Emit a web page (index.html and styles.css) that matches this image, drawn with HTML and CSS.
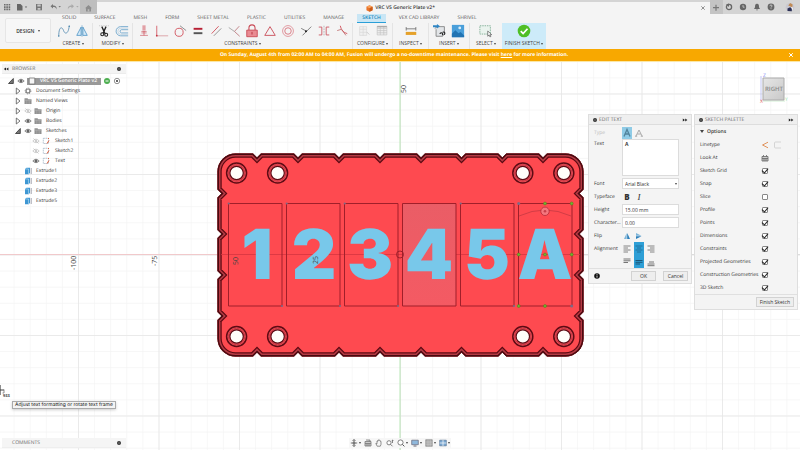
FILE: index.html
```html
<!DOCTYPE html>
<html lang="en">
<head>
<meta charset="utf-8">
<title>VRC V5 Generic Plate v2*</title>
<link rel="stylesheet" href="styles.css">
</head>
<body>
<svg class="defs" aria-hidden="true">
  <symbol id="eye" viewBox="0 0 8 8"><path d="M.8 4Q4 .4 7.2 4 4 7.400 .8 4z" fill="#ddd" stroke="#777" stroke-width=".8"/><circle cx="4" cy="4" r="1.400" fill="#666"/></symbol>
  <symbol id="eye-off" viewBox="0 0 8 8"><path d="M.8 4Q4 .4 7.200 4 4 7.400 .8 4zM1.500 1.500l5 5" fill="none" stroke="#bbb" stroke-width=".7"/><circle cx="4" cy="4" r="1.200" fill="#ccc"/></symbol>
  <symbol id="folder" viewBox="0 0 8 8"><path d="M.5 1.300h3l.8.9h3.200v4.800h-7z" fill="#909090"/><path d="M.5 3.200h7M2.800 3.200v3.800M5.200 3.200v3.800" stroke="#bbb" stroke-width=".5"/></symbol>
  <symbol id="closed" viewBox="0 0 8 8"><path d="M2.300 1v6L6 4z" fill="#fff" stroke="#555" stroke-width=".8"/></symbol>
  <symbol id="open" viewBox="0 0 8 8"><path d="M6.300 1.500v5H1.500z" fill="#777" stroke="#333" stroke-width=".8"/></symbol>
  <symbol id="sketch" viewBox="0 0 8 8"><path d="M1.300 1.300h5.200v5.200H1.300z" fill="#fff" stroke="#8aa0b4" stroke-width=".6" stroke-dasharray="1.600 .6"/><path d="M5 6.500l2-3M6 1l1 1" stroke="#e2603c" stroke-width="1"/></symbol>
  <symbol id="extrude" viewBox="0 0 8 8"><path d="M1 2l1.500-1.300H6v5L4.800 7.300H1z" fill="#3e97d3"/><path d="M1 2h3.500v5.300" stroke="#bfe0f5" stroke-width=".6" fill="none"/><path d="M7.200 1v6" stroke="#667" stroke-width=".6"/></symbol>
  <symbol id="gear" viewBox="0 0 8 8"><circle cx="4" cy="4" r="2" fill="none" stroke="#777" stroke-width="1.200"/><circle cx="4" cy="4" r="2.900" fill="none" stroke="#777" stroke-width=".8" stroke-dasharray="1.200 1.078"/></symbol>
  <symbol id="dot" viewBox="0 0 6 6"><circle cx="3" cy="3" r="2" fill="#333"/><path d="M2 3h2" stroke="#bbb" stroke-width=".5"/></symbol>
  <symbol id="left" viewBox="0 0 6 6"><path d="M3 1.500v3L.8 3zM5.400 1.500v3L3.200 3z" fill="#222"/></symbol>
  <symbol id="right" viewBox="0 0 6 6"><path d="M.8 1.500v3L3 3zM3.200 1.500v3L5.400 3z" fill="#222"/></symbol>
</svg>

<header class="topbar">
  <nav class="quick">
    <button class="ico" aria-label="Data panel"><svg viewBox="0 0 12 12"><g fill="#6e6e6e"><path d="M3 3h1.600v1.600H3zM5.300 3h1.600v1.600H5.300zM7.600 3h1.600v1.600H7.600zM3 5.300h1.600v1.600H3zM5.300 5.300h1.600v1.600H5.300zM7.600 5.300h1.600v1.600H7.600zM3 7.600h1.600v1.600H3zM5.300 7.600h1.600v1.600H5.300zM7.600 7.600h1.600v1.600H7.600z"/></g></svg></button>
    <button class="ico file" aria-label="File"><svg viewBox="0 0 14 12"><path d="M2 3h3.500L7.500 5v4.500H2z" fill="#666"/><path d="M9.800 5.500h2.400l-1.200 1.500z" fill="#666"/></svg></button>
    <button class="ico" aria-label="Save"><svg viewBox="0 0 12 12"><path d="M3 3h6v6.300H3z" fill="#777"/><path d="M4.300 3.600h3.400v2H4.300zM4.600 7h2.800v1.700H4.600z" fill="#c9c9c9"/></svg></button>
    <button class="ico wide" aria-label="Undo"><svg viewBox="0 0 14 12"><path d="M5 3L2.500 5.300 5 7.500V6c2 0 3 .5 3.500 2.500C9 5.500 7.500 4.500 5 4.500z" fill="#777"/><path d="M10.500 5h2.400l-1.200 1.500z" fill="#777"/></svg></button>
    <button class="ico wide" aria-label="Redo"><svg viewBox="0 0 14 12"><path d="M6.500 3L9 5.300 6.500 7.500V6C4.500 6 3.500 6.500 3 8.500 2.500 5.500 4 4.500 6.500 4.500z" fill="#aaa"/><path d="M11.200 5h2.400l-1.200 1.500z" fill="#aaa"/></svg></button>
  </nav>
  <button class="home" aria-label="Home"><svg viewBox="0 0 16 12"><path d="M8.500 4L5 7.300H6V10.500h5V7.300h1z" fill="#8d8d8d"/><path d="M7.700 8.200h1.600v2.300H7.700z" fill="#bbb"/></svg></button>
  <div class="doc">
    <svg class="cube" viewBox="0 0 8 8"><path d="M4 .3L7.500 2v4L4 7.800.5 6V2z" fill="#e8732a"/><path d="M4 .3L7.500 2 4 3.700.5 2z" fill="#f9a35d"/><path d="M4 3.700v4.100L7.500 6V2z" fill="#c95a17"/></svg>
    <span>VRC V5 Generic Plate v2*</span>
    <button class="close" aria-label="Close document"><svg viewBox="0 0 6 6"><path d="M1.300 1.300l3.400 3.400M4.700 1.300L1.300 4.700" stroke="#777" stroke-width=".8"/></svg></button>
  </div>
  <button class="plus" aria-label="New design"><svg viewBox="0 0 12 12"><path d="M6 3.700v6M3 6.700h6" stroke="#777" stroke-width="1.200"/></svg></button>
  <nav class="status">
    <button class="ico" aria-label="Extensions"><svg viewBox="0 0 12 12"><circle cx="6" cy="6" r="2.600" fill="none" stroke="#666" stroke-width="1.300"/><path d="M6 6V2.500L3 3.500z" fill="#666"/></svg></button>
    <button class="ico" aria-label="Job status"><svg viewBox="0 0 12 12"><circle cx="6" cy="6" r="3.200" fill="#666"/><path d="M6 4v2.200h1.600" stroke="#ddd" stroke-width=".7" fill="none"/></svg></button>
    <button class="ico" aria-label="Notifications"><svg viewBox="0 0 12 12"><path d="M6 2.800c2 0 2 2 2 3.500l1 1.700H3l1-1.700c0-1.500 0-3.500 2-3.500zM5.200 8.500h1.600v.8H5.200z" fill="#666"/></svg></button>
    <button class="ico" aria-label="Help"><svg viewBox="0 0 12 12"><circle cx="6" cy="6" r="3.400" fill="#666"/><path d="M4.900 5.200c0-1.600 2.200-1.500 2.200-.2 0 .8-1.100.7-1.100 1.600M6 7.300v.8" stroke="#ddd" stroke-width=".8" fill="none"/></svg></button>
    <button class="ico avatar" aria-label="Account"><svg viewBox="0 0 12 12"><circle cx="6" cy="6.300" r="4.300" fill="#c9c8d0"/><path d="M4.200 4.500l2-2.500 2.400 1.500-.3 2.800z" fill="#c18b55"/><path d="M3.500 10V7.500l2.500-1.300 1.800 1V10.200z" fill="#2c3156"/><path d="M7 6l2 .8-.5 2.800z" fill="#f7f7fa"/></svg></button>
  </nav>
</header>

<section class="ribbon">
  <button class="design">DESIGN <i class="caret"></i></button>
  <div class="ribbon-main">
    <nav class="tabs">
      <a href="#">SOLID</a><a href="#">SURFACE</a><a href="#">MESH</a><a href="#">FORM</a><a href="#">SHEET METAL</a><a href="#">PLASTIC</a><a href="#">UTILITIES</a><a href="#">MANAGE</a><a href="#" class="on">SKETCH</a><a href="#">VEX CAD LIBRARY</a><a href="#">SHRIVEL</a>
    </nav>
    <div class="groups">
      <div class="group create">
        <div class="tools">
          <svg viewBox="0 0 16 16"><path d="M2 14C2 2 6 3 7.500 7.500S13 12 14 2" fill="none" stroke="#4c86ad" stroke-width=".9"/><circle cx="2" cy="13.700" r=".9" fill="#4c86ad"/><circle cx="14" cy="2.500" r=".9" fill="#4c86ad"/></svg>
          <svg viewBox="0 0 16 16"><path d="M7 3.500V13H2zM9 3.500V13h5z" fill="#d5e9f7" stroke="#4991c4" stroke-width=".9"/><path d="M8 1.500v13" stroke="#4991c4" stroke-width=".7"/></svg>
        </div>
        <button>CREATE <i class="caret"></i></button>
      </div>
      <div class="group modify">
        <div class="tools">
          <svg viewBox="0 0 16 16"><path d="M2.500 2h11" stroke="#999" stroke-width=".6" stroke-dasharray="1 1"/><path d="M5.500 3l3.700 8M10.300 3L7 10.500" stroke="#222" stroke-width="1.500"/><circle cx="6" cy="11.800" r="1.700" fill="none" stroke="#222" stroke-width="1.200"/><circle cx="10.500" cy="12.300" r="1.700" fill="none" stroke="#222" stroke-width="1.200"/></svg>
          <svg viewBox="0 0 16 16"><path d="M15 3H6.500a5 5 0 0 0 0 10.500H15M15 6.500H7.300a1.900 1.900 0 0 0 0 3.700H15" fill="none" stroke="#5c9cc7" stroke-width=".9"/><path d="M15 4.700H6.900a3.500 3.500 0 0 0 0 7.200H15" fill="none" stroke="#a9c7dc" stroke-width=".7"/></svg>
        </div>
        <button>MODIFY <i class="caret"></i></button>
      </div>
      <div class="group constraints">
        <div class="tools">
          <svg viewBox="0 0 16 16"><path d="M7 1.500v6M9 1.500v6" stroke="#d04a56" stroke-width=".9"/><path d="M5 8.500h6M5 10.200h6M3.500 13h9" stroke="#d88a91" stroke-width="1.100"/><path d="M8 8v5" stroke="#d04a56" stroke-width=".8"/></svg>
          <svg viewBox="0 0 16 16"><path d="M2 2v11.500" stroke="#d04a56" stroke-width=".9"/><path d="M2 13.500h13" stroke="#d99ba0" stroke-width="1"/><circle cx="2" cy="13.300" r="1" fill="#c43442"/></svg>
          <svg viewBox="0 0 16 16"><circle cx="7" cy="9.500" r="4.600" fill="none" stroke="#d04a56"/><path d="M8 2l7 5.500" stroke="#777" stroke-width=".9"/></svg>
          <svg viewBox="0 0 16 16"><path d="M3 5.500h10" stroke="#b71f33" stroke-width="2.200"/><path d="M3 10.500h10" stroke="#555" stroke-width="2.200"/></svg>
          <svg viewBox="0 0 16 16"><path d="M3 11l8-8.500" stroke="#d04a56"/><path d="M5.500 13.500L14 5" stroke="#888"/></svg>
          <svg viewBox="0 0 16 16"><path d="M14 2.500L8.500 8.500l6 5.500" fill="none" stroke="#b66a70" stroke-width=".9"/><path d="M2 4l6.500 4.500" stroke="#999" stroke-width=".9"/></svg>
          <svg viewBox="0 0 16 16"><path d="M4.500 7V4.500a3.500 3.500 0 0 1 7 0V7" fill="none" stroke="#c84854" stroke-width="1.200"/><path d="M2 7h12v7.500H2z" fill="#e98b92" stroke="#c84854"/><path d="M8 9v3" stroke="#b02c3a"/></svg>
          <svg viewBox="0 0 16 16"><path d="M8 3L2 13h12z" fill="none" stroke="#c84854"/></svg>
          <svg viewBox="0 0 16 16"><circle cx="8" cy="8" r="6.200" fill="none" stroke="#dc858d" stroke-width=".9"/><circle cx="8" cy="8" r="3.700" fill="none" stroke="#d4606a" stroke-width=".9"/></svg>
          <svg viewBox="0 0 16 16"><path d="M14 3L4 13M2.500 5l6 3.200" stroke="#666" stroke-width=".9"/><circle cx="8" cy="8.300" r="1.200" fill="#222"/></svg>
          <svg viewBox="0 0 16 16"><path d="M2 3.500h3.500v9H2M14 3.500h-3.500v9H14" fill="none" stroke="#cc5661"/><path d="M8 2v12" stroke="#999" stroke-width=".7" stroke-dasharray="2 1"/></svg>
          <svg viewBox="0 0 16 16"><path d="M6 2c1 5 4 8 8 9" fill="none" stroke="#d04a56"/><path d="M2.500 7.500l5-1.500M8 7l4.500 6" stroke="#b66" stroke-width=".9"/></svg>
        </div>
        <button>CONSTRAINTS <i class="caret"></i></button>
      </div>
      <div class="group configure">
        <div class="tools">
          <svg viewBox="0 0 16 16"><path d="M3 3h8v10H3zM3 6h8M3 9.500h8M7 3v10" fill="#f0f0f0" stroke="#d8d8d8" stroke-width=".8"/><path d="M11 9l3 3" stroke="#c7c7c7"/></svg>
          <svg viewBox="0 0 16 16"><path d="M2.500 2.500h11v10h-11zM2.500 5h11M2.500 7.500h11M2.500 10h11M6 2.500v10M10 2.500v10" fill="#eee" stroke="#c4c4c4" stroke-width=".8"/><path d="M2.500 3h11" stroke="#aaa" stroke-width="1.500"/></svg>
        </div>
        <button>CONFIGURE <i class="caret"></i></button>
      </div>
      <div class="group inspect">
        <div class="tools"><svg viewBox="0 0 16 16"><path d="M2.500 5.500h11M2.500 3.500v4M13.500 3.500v4" stroke="#666" stroke-width=".9"/><path d="M2 9h12v3.500H2z" fill="#e5a12a"/></svg></div>
        <button>INSPECT <i class="caret"></i></button>
      </div>
      <div class="group insert">
        <div class="tools">
          <svg viewBox="0 0 16 16"><path d="M2 5l3-2h8v8l-2 3H3.500V6" fill="#e2e5e8" stroke="#666" stroke-width=".8"/><path d="M0 1.500h4.500V0L8 2.700 4.500 5V3.800H0z" fill="#2f86c5"/><path d="M8 11.500a1.500 1.500 0 1 1 2.500 1.200M11 9.500a1.500 1.500 0 1 1 1.500 2.500" fill="none" stroke="#222" stroke-width="1.200"/></svg>
          <svg viewBox="0 0 16 16"><path d="M1 1h14v14H1z" fill="#4a9fda"/><path d="M1 11l4-4 3.500 3.500L11 9l4 4v2H1z" fill="#2274b3"/><circle cx="10" cy="4.500" r="1.600" fill="#d9ecf8"/></svg>
        </div>
        <button>INSERT <i class="caret"></i></button>
      </div>
      <div class="group select">
        <div class="tools"><svg viewBox="0 0 16 16"><path d="M1 2h12v9.500H1z" fill="#eaf3ee" stroke="#6fa588" stroke-width=".9" stroke-dasharray="1.700 1"/><path d="M10 8v6l1.500-1.400 1 2.200 1-.5-1-2.100H14.500z" fill="#fff" stroke="#444" stroke-width=".7"/></svg></div>
        <button>SELECT <i class="caret"></i></button>
      </div>
      <div class="group finish">
        <div class="tools"><svg viewBox="0 0 16 16"><circle cx="8" cy="8" r="7.200" fill="#4fbf26"/><path d="M4.300 8.200l2.700 2.700 5-5.500" fill="none" stroke="#fff" stroke-width="2"/></svg></div>
        <button>FINISH SKETCH <i class="caret"></i></button>
      </div>
    </div>
  </div>
</section>

<div class="banner">
  <p>On Sunday, August 4th from 02:00 AM to 04:00 AM, Fusion will undergo a no-downtime maintenance. Please visit <a href="#">here</a> for more information.</p>
  <button aria-label="Dismiss"><svg viewBox="0 0 6 6"><path d="M1.200 1.200l3.600 3.600M4.800 1.200L1.200 4.800" stroke="#fff" stroke-width="1"/></svg></button>
</div>

<main class="workspace">
  <svg class="canvas" viewBox="0 62 800 388" preserveAspectRatio="xMidYMid slice" role="img" aria-label="Sketch canvas">
    <defs>
      <pattern id="minor" x="400" y="254.500" width="16.100" height="16.100" patternUnits="userSpaceOnUse"><path d="M0 0H16.100M0 0V16.100" stroke="#f4f4f4" stroke-width="1.400" fill="none"/></pattern>
      <pattern id="major" x="400" y="254.500" width="80.500" height="80.500" patternUnits="userSpaceOnUse"><path d="M0 0H80.500M0 0V80.500" stroke="#e6e6e6" stroke-width="1.600" fill="none"/></pattern>
      <linearGradient id="hover" x2="0" y2="1"><stop stop-color="#ea5d66"/><stop offset="1" stop-color="#f45a63"/></linearGradient>
      <path id="plate" d="M236 153.500H253l4 4 4-4H294l4 4 4-4H335l4 4 4-4H376l4 4 4-4H417l4 4 4-4H457.500l4 4 4-4H498.300l4 4 4-4H539l4 4 4-4H565.500A18 18 0 0 1 583.500 171.500V189.500l-4 4 4 4V230l-4 4 4 4V271l-4 4 4 4V312l-4 4 4 4V338.500A18 18 0 0 1 565.500 356.500H547l-4-4-4 4H506.300l-4-4-4 4H465.500l-4-4-4 4H425l-4-4-4 4H384l-4-4-4 4H343l-4-4-4 4H302l-4-4-4 4H261l-4-4-4 4H235.500A18 18 0 0 1 217.500 338.500V320l4-4-4-4V279l4-4-4-4V238l4-4-4-4V197.500l4-4-4-4V171.500A18 18 0 0 1 235.500 153.500z"/>
      <clipPath id="inside"><use href="#plate"/></clipPath>
      <g id="hole"><circle r="10" fill="#f2525b" stroke="#5e0b14" stroke-width="1.500"/><circle r="8.200" fill="none" stroke="#ca3642"/><circle r="6.700" fill="#fffefa" stroke="#5e0b14" stroke-width="1.200"/></g>
    </defs>
    <path d="M0 62H800V450H0z" fill="#fff"/>
    <path d="M0 62H800V450H0z" fill="url(#minor)"/>
    <path d="M0 62H800V450H0z" fill="url(#major)"/>
    <path d="M400 62V450" stroke="#b9e6b6"/>
    <path d="M0 254.500H400" stroke="#f1c9cb"/><path d="M400 254.500H800" stroke="#ddd"/>
    <g class="ruler">
      <text transform="translate(76 270) rotate(-90)">-100</text>
      <text transform="translate(157 266) rotate(-90)">-75</text>
      <text transform="translate(406 93) rotate(-90)">50</text>
    </g>
    <g clip-path="url(#inside)">
      <use href="#plate" fill="#fe4a50" stroke="#5c0a12" stroke-width="8.400"/>
      <use href="#plate" fill="none" stroke="#b53a44" stroke-width="6"/>
      <use href="#plate" fill="none" stroke="#4a0a10" stroke-width="3"/>
    </g>
    <use href="#hole" x="236.600" y="173"/><use href="#hole" x="277.600" y="173"/><use href="#hole" x="522.800" y="173"/><use href="#hole" x="563.800" y="173"/>
    <use href="#hole" x="236.600" y="336.500"/><use href="#hole" x="277.600" y="336.500"/><use href="#hole" x="522.800" y="336.500"/><use href="#hole" x="563.800" y="336.500"/>
    <path d="M221 254.500H580" stroke="#d53540" stroke-width=".8"/>
    <g fill="none" stroke="#a01f2a">
      <path d="M228.500 203.500h53.500v102.500h-53.500zM286.500 203.500h53.500v102.500h-53.500zM344.500 203.500h53.500v102.500h-53.500zM460.500 203.500h53.500v102.500h-53.500zM518.500 203.500h53.500v102.500h-53.500z"/>
      <path d="M402.500 203.500h53.500v102.500h-53.500z" fill="url(#hover)"/>
      <circle cx="400" cy="254.500" r="3.500"/>
      <path d="M519 216Q545 204 571 216" stroke="#bd3640" stroke-width=".7"/>
    </g>
    <g class="plate-text">
      <text x="257" y="279">1</text><text x="314" y="279">2</text><text x="370" y="279">3</text><text x="429" y="279">4</text><text x="487" y="279">5</text><text x="545" y="279">A</text>
    </g>
    <g class="ruler"><text transform="translate(238 265) rotate(-90)">50</text><text transform="translate(318 264) rotate(-90)">25</text></g>
    <circle cx="545" cy="211.300" r="4.200" fill="#f4777e" stroke="#b52a36" stroke-width=".8"/><circle cx="545" cy="211.300" r="1.300" fill="#c9404b"/>
    <g fill="#70b52c" stroke="#4d7d1c" stroke-width=".5"><circle cx="545" cy="203.500" r="1.500"/><circle cx="571.700" cy="203.500" r="1.500"/><circle cx="518.700" cy="254.500" r="1.500"/><circle cx="545" cy="254.500" r="1.500"/><circle cx="571.700" cy="254.500" r="1.500"/><circle cx="518.700" cy="306" r="1.500"/><circle cx="545" cy="306" r="1.500"/></g>
    <g fill="#7d6a86"><circle cx="518.700" cy="203.500" r="1.500"/><circle cx="571.700" cy="306" r="1.500"/><circle cx="228.700" cy="203.500" r="1.100"/><circle cx="286.700" cy="203.500" r="1.100"/><circle cx="344.700" cy="203.500" r="1.100"/><circle cx="460.700" cy="203.500" r="1.100"/><circle cx="282" cy="306" r="1.100"/><circle cx="340" cy="306" r="1.100"/><circle cx="398" cy="306" r="1.100"/><circle cx="514" cy="306" r="1.100"/></g>
    <path d="M0 385v10M0 390h4" stroke="#444" stroke-width="1.200"/>
    <path d="M4 389.500v3.500h-1.500" fill="none" stroke="#777" stroke-width=".8"/>
    <text class="cursor-text" x="3" y="397">933</text>
  </svg>

  <aside class="browser">
    <h2 class="panel-head"><svg><use href="#left"/></svg><span>BROWSER</span><svg class="end"><use href="#dot"/></svg></h2>
    <ul class="tree">
      <li class="root"><svg><use href="#open"/></svg><svg><use href="#eye"/></svg><span class="chip"><svg viewBox="0 0 8 8"><path d="M1.200 1h5.600v6H1.200z" fill="#f5f5f5" stroke="#666" stroke-width=".7"/></svg>VRC V5 Generic Plate v2</span><svg viewBox="0 0 8 8"><circle cx="4" cy="4" r="3" fill="#4cae4f"/><path d="M2.500 4h3" stroke="#fff"/></svg><svg viewBox="0 0 8 8"><circle cx="4" cy="4" r="2.700" fill="#fff" stroke="#666" stroke-width=".7"/><circle cx="4" cy="4" r="1" fill="#333"/></svg></li>
      <li class="l1"><svg><use href="#closed"/></svg><svg><use href="#gear"/></svg><span>Document Settings</span></li>
      <li class="l1"><svg><use href="#closed"/></svg><svg><use href="#folder"/></svg><span>Named Views</span></li>
      <li class="l1"><svg><use href="#closed"/></svg><svg><use href="#eye-off"/></svg><svg><use href="#folder"/></svg><span>Origin</span></li>
      <li class="l1"><svg><use href="#closed"/></svg><svg><use href="#eye"/></svg><svg><use href="#folder"/></svg><span>Bodies</span></li>
      <li class="l1"><svg><use href="#open"/></svg><svg><use href="#eye"/></svg><svg><use href="#folder"/></svg><span>Sketches</span></li>
      <li class="l2"><svg><use href="#eye-off"/></svg><svg><use href="#sketch"/></svg><span>Sketch1</span></li>
      <li class="l2"><svg><use href="#eye-off"/></svg><svg><use href="#sketch"/></svg><span>Sketch2</span></li>
      <li class="l2"><svg><use href="#eye"/></svg><svg><use href="#sketch"/></svg><span>Text</span></li>
      <li class="ex"><svg><use href="#extrude"/></svg><span>Extrude1</span></li>
      <li class="ex"><svg><use href="#extrude"/></svg><span>Extrude2</span></li>
      <li class="ex"><svg><use href="#extrude"/></svg><span>Extrude3</span></li>
      <li class="ex"><svg><use href="#extrude"/></svg><span>Extrude5</span></li>
    </ul>
  </aside>

  <svg class="viewcube" viewBox="0 0 34 34" role="img" aria-label="View cube">
    <defs><linearGradient id="face" x2="1" y2="1"><stop stop-color="#e6e6e6"/><stop offset="1" stop-color="#c9c9c9"/></linearGradient></defs>
    <path d="M5 30V5" stroke="#aab0f0" stroke-width=".7"/><path d="M5 30h24" stroke="#bde8c0" stroke-width=".7"/>
    <path d="M7 7h21v22H7z" fill="url(#face)" stroke="#aaa" stroke-width="1"/>
    <text x="18" y="20" text-anchor="middle" fill="#888" class="face">RIGHT</text>
    <text x="7" y="6" fill="#7d83f2">Z</text><text x="4" y="32" fill="#ef6a6a">X</text><text x="29" y="30" fill="#9be5a5">Y</text>
  </svg>

  <div class="dialogs">
    <form class="panel edit">
      <h2 class="panel-head"><svg><use href="#dot"/></svg><span>EDIT TEXT</span><svg class="end"><use href="#right"/></svg></h2>
      <div class="fields">
        <div class="row dim"><span>Type</span><button type="button" class="seg on" aria-label="Text"><svg viewBox="0 0 10 12"><path d="M2 9.500l3-7 3 7M3.200 7h3.600" fill="none" stroke="#52839b" stroke-width="1.300"/></svg></button><button type="button" class="seg" aria-label="Text on path"><svg viewBox="0 0 10 12"><path d="M2 9l3-6 3 6M3.200 7h3.600M1 9.200h2.200M6.800 9.200H9" fill="none" stroke="#aaa" stroke-width="1"/></svg></button></div>
        <div class="row tall"><label for="text">Text</label><textarea id="text">A</textarea></div>
        <div class="row"><label for="font">Font</label><div class="pick"><select id="font"><option>Arial Black</option></select><i class="caret"></i></div></div>
        <div class="row"><span>Typeface</span><button type="button" class="seg face-b">B</button><button type="button" class="seg face-i">I</button></div>
        <div class="row"><label for="height">Height</label><input id="height" type="text" value="15.00 mm"></div>
        <div class="row"><label for="char">Character…</label><input id="char" type="text" value="0.00"></div>
        <div class="row"><span>Flip</span><button type="button" class="seg" aria-label="Flip horizontally"><svg viewBox="0 0 10 12"><path d="M4.700 3v6H2z" fill="#7db5da"/><path d="M5.200 3v6H8z" fill="#2c7fba"/></svg></button><button type="button" class="seg" aria-label="Flip vertically"><svg viewBox="0 0 10 12"><path d="M2 3l5.500 2.800H2z" fill="#7db5da"/><path d="M2 9l5.500-2.800H2z" fill="#2c7fba"/></svg></button></div>
        <div class="row"><span>Alignment</span><button type="button" class="seg" aria-label="Left"><svg viewBox="0 0 10 12"><path d="M1.500 3h7M1.500 5h4.500M1.500 7h7M1.500 9h4.500" stroke="#777" stroke-width=".9"/></svg></button><button type="button" class="seg pick-on" aria-label="Center"><svg viewBox="0 0 10 12"><path d="M1.500 3h7M3 5h4M1.500 7h7M3 9h4" stroke="#1f6e98" stroke-width=".9"/></svg></button><button type="button" class="seg" aria-label="Right"><svg viewBox="0 0 10 12"><path d="M1.500 3h7M4 5h4.500M1.500 7h7M4 9h4.500" stroke="#777" stroke-width=".9"/></svg></button></div>
        <div class="row"><span></span><button type="button" class="seg" aria-label="Top"><svg viewBox="0 0 10 12"><path d="M1.500 3h7M1.500 4.800h7M1.500 6.500h4.500" stroke="#666" stroke-width=".9"/></svg></button><button type="button" class="seg pick-on" aria-label="Middle"><svg viewBox="0 0 10 12"><path d="M1.500 4.500h7M1.500 6.300h7M1.500 8h4.500" stroke="#174f6e" stroke-width=".9"/></svg></button><button type="button" class="seg" aria-label="Bottom"><svg viewBox="0 0 10 12"><path d="M3 6h5M1.500 8h7M1.500 9.700h7" stroke="#666" stroke-width=".9"/></svg></button></div>
      </div>
      <footer class="actions"><svg class="info" viewBox="0 0 6 6"><circle cx="3" cy="3" r="2.800" fill="#111"/><path d="M3 1.200v.8M3 2.500v2.200" stroke="#fff" stroke-width=".8"/></svg><button type="button">OK</button><button type="button">Cancel</button></footer>
    </form>

    <form class="panel palette">
      <h2 class="panel-head"><svg><use href="#dot"/></svg><span>SKETCH PALETTE</span><svg class="end"><use href="#right"/></svg></h2>
      <div class="fields">
        <h3><i class="caret"></i>Options</h3>
        <div class="opt"><span>Linetype</span><svg viewBox="0 0 8 8"><path d="M7 1.200L1.500 4 7 6.800" fill="none" stroke="#e0935c"/></svg><svg class="second" viewBox="0 0 8 8"><rect x="1.500" y="1" width="5" height="6" rx="1" fill="none" stroke="#c5c5c5" stroke-width=".7"/></svg></div>
        <div class="opt"><span>Look At</span><svg viewBox="0 0 8 8"><path d="M1 2.500h6V7H1zM2.500 1v1.500M5.500 1v1.500M1 4.500h6M3 4.500V7M5 4.500V7" fill="#ccc" stroke="#666" stroke-width=".8"/></svg></div>
        <div class="opt"><label for="o1">Sketch Grid</label><input id="o1" type="checkbox" checked></div>
        <div class="opt"><label for="o2">Snap</label><input id="o2" type="checkbox" checked></div>
        <div class="opt"><label for="o3">Slice</label><input id="o3" type="checkbox"></div>
        <div class="opt"><label for="o4">Profile</label><input id="o4" type="checkbox" checked></div>
        <div class="opt"><label for="o5">Points</label><input id="o5" type="checkbox" checked></div>
        <div class="opt"><label for="o6">Dimensions</label><input id="o6" type="checkbox" checked></div>
        <div class="opt"><label for="o7">Constraints</label><input id="o7" type="checkbox" checked></div>
        <div class="opt"><label for="o8">Projected Geometries</label><input id="o8" type="checkbox" checked></div>
        <div class="opt"><label for="o9">Construction Geometries</label><input id="o9" type="checkbox" checked></div>
        <div class="opt"><label for="o10">3D Sketch</label><input id="o10" type="checkbox" checked></div>
      </div>
      <footer class="actions"><button type="button">Finish Sketch</button></footer>
    </form>
  </div>

  <div class="tooltip" role="tooltip">Adjust text formatting or rotate text frame</div>
  <div class="comments panel-head"><span>COMMENTS</span><svg class="end"><use href="#dot"/></svg></div>
  <nav class="navbar">
    <button class="drop" aria-label="Orbit"><svg viewBox="0 0 8 8"><path d="M4 .5v7M.8 4h6.400M2.500 2L4 .5 5.500 2M2.500 6L4 7.500 5.500 6" stroke="#666" stroke-width=".9" fill="none"/><circle cx="4" cy="4" r="1.500" fill="#777"/></svg><i class="caret"></i></button>
    <button aria-label="Look at"><svg viewBox="0 0 8 8"><path d="M1 2.500h6V7H1zM2 1h4v1.500M1 4.500h6M3 4.500V7M5 4.500V7" fill="#ccc" stroke="#777" stroke-width=".8"/></svg></button>
    <button aria-label="Pan"><svg viewBox="0 0 8 8"><path d="M2.200 7.200L.8 4.500l1.200.3V2l1 .2V1l1 .1.9.1.2 1 .9.2v3L5.300 7.200z" fill="#f6f6f6" stroke="#666" stroke-width=".7"/></svg></button>
    <button aria-label="Zoom"><svg viewBox="0 0 8 8"><circle cx="3" cy="3.800" r="2.100" fill="#fff" stroke="#666" stroke-width=".8"/><path d="M4.500 5.300L6.500 7.300M6.500 1v3M5.700 1.800L6.500 1l.8.800" stroke="#666" stroke-width=".8" fill="none"/></svg></button>
    <button class="drop" aria-label="Fit"><svg viewBox="0 0 8 8"><circle cx="3.500" cy="3.500" r="2.600" fill="#fff" stroke="#666" stroke-width=".8"/><path d="M5.400 5.400l2 2" stroke="#555"/></svg><i class="caret"></i></button>
    <button class="drop" aria-label="Display settings"><svg viewBox="0 0 8 8"><path d="M.7 1.200h6.600v4.500H.7z" fill="#8fb8dc" stroke="#667" stroke-width=".7"/><path d="M2.500 7h3" stroke="#667"/></svg><i class="caret"></i></button>
    <button class="drop" aria-label="Grid and snaps"><svg viewBox="0 0 8 8"><path d="M.7.700h6.600v6.600H.7z" fill="#aaa" stroke="#888" stroke-width=".6"/><path d="M.7 3h6.600M3 .7v6.600M5.200.7v6.600M.7 5.200h6.600" stroke="#ccc" stroke-width=".5"/></svg><i class="caret"></i></button>
    <button class="drop" aria-label="Viewports"><svg viewBox="0 0 8 8"><path d="M.7 1.200h6.600v5.600H.7z" fill="#79a7d2" stroke="#5b7898" stroke-width=".7"/><path d="M4 1v6M.7 4h6.600" stroke="#fff" stroke-width=".7"/></svg><i class="caret"></i></button>
  </nav>
</main>
</body>
</html>
```
FILE: styles.css
```css
* { box-sizing: border-box; }
body {
  margin: 0;
  height: 100vh;
  display: flex;
  flex-direction: column;
  overflow: hidden;
  font: 5px/8px "Open Sans", "Noto Sans", sans-serif;
  color: #333;
  background: #fff;
  text-rendering: geometricPrecision;
}
svg { display: block; flex: none; }
button {
  font: inherit;
  color: inherit;
  margin: 0;
  padding: 0;
  border: 0;
  background: none;
}
.defs { position: absolute; width: 0; height: 0; }
.caret {
  display: inline-block;
  width: 0;
  height: 0;
  border: 1px solid transparent;
  border-top: 2px solid #444;
  border-bottom: 0;
  vertical-align: middle;
}

/* Title bar */
.topbar { display: flex; height: 14px; background: #d4d4d4; }
.quick { display: flex; width: 80px; }
.ico svg { width: 12px; height: 12px; }
.quick .ico { width: 12px; margin-left: 1px; }
.quick .ico + .ico { margin-left: 2px; }
.quick .file, .quick .wide { width: 14px; }
.quick .file svg, .quick .wide svg { width: 14px; }
.quick .file + .ico { margin-left: 4px; }
.quick .ico + .wide { margin-left: 3px; }
.home { width: 17px; background: #bebebe; }
.home svg { width: 16px; height: 12px; }
.doc {
  flex: 1;
  display: flex;
  align-items: center;
  justify-content: center;
  gap: 2px;
  margin-top: 2px;
  padding-right: 6px;
  background: #f4f4f4;
  position: relative;
  font-weight: 600;
}
.cube { width: 7px; height: 7px; }
.close { position: absolute; right: 4px; top: 3px; }
.close svg { width: 6px; height: 6px; }
.plus { width: 13px; background: #c4c4c4; }
.plus svg { width: 12px; height: 12px; }
.status { display: flex; gap: 2px; padding-right: 4px; }
.status .avatar { margin-left: 5px; }

/* Ribbon */
.ribbon { display: flex; height: 35px; background: #f4f4f4; }
.design {
  width: 46px;
  height: 25px;
  margin: 4px 3px 0 5px;
  border: 1px solid #e6e6e6;
  border-radius: 2px;
  background: #f7f7f7;
  font-weight: 600;
}
.design .caret { margin-left: 2px; }
.ribbon-main { flex: 1; }
.tabs { display: flex; gap: 8px; padding-left: 3px; height: 9px; }
.tabs a { padding: 0 5px; color: #555; text-decoration: none; white-space: nowrap; }
.tabs .on { background: #c9e6f5; color: #1b86bd; font-weight: 600; border-bottom: 1px solid #2a9fd8; }
.groups { display: flex; height: 26px; }
.group {
  display: flex;
  flex-direction: column;
  align-items: center;
  border-right: 1px solid #e4e4e4;
}
.group button { white-space: nowrap; color: #444; }
.tools { display: flex; gap: 4px; height: 16px; align-items: center; }
.tools svg { width: 14px; height: 14px; }
.create { width: 39px; }
.modify { width: 40px; }
.constraints { width: 220px; }
.configure { width: 40px; }
.inspect { width: 36px; }
.insert { width: 41px; }
.select { width: 32px; border-right: 0; }
.finish { width: 44px; background: #cdebf9; border-right: 0; }

/* Maintenance notice */
.banner {
  display: flex;
  align-items: center;
  height: 13px;
  background: #f8a800;
  border-bottom: 1px solid #fbe7a6;
  color: #fff;
  font-weight: 700;
  padding-right: 6px;
}
.banner p { flex: 1; margin: 0; text-align: center; }
.banner a { color: inherit; }
.banner svg { width: 6px; height: 6px; }

/* Canvas */
.workspace { flex: 1; position: relative; min-height: 0; }
.canvas { width: 100%; height: 100%; }
.ruler text { font: 7px "Open Sans", sans-serif; fill: #444; }
.plate-text text { font: 900 69px Inter, sans-serif; fill: #78c8ea; text-anchor: middle; }
.cursor-text { font: 700 4px "Open Sans", sans-serif; fill: #444; }
.viewcube { position: absolute; right: 10px; top: 9px; width: 34px; height: 34px; font: 5px "Open Sans", sans-serif; }
.face { font-size: 6px; font-weight: 600; }

.panel-head {
  display: flex;
  align-items: center;
  gap: 1px;
  height: 10px;
  margin: 0;
  padding: 0 3px;
  background: #efefef;
  border-bottom: 1px solid #ddd;
  font-size: 5px;
  font-weight: 400;
  color: #666;
}
.panel-head svg { width: 6px; height: 6px; }
.panel-head .end { margin-left: auto; }

/* Browser tree */
.browser { position: absolute; left: 2px; top: 2px; width: 124px; }
.browser .panel-head { gap: 3px; padding: 0 4px 0 1px; background: #f3f3f3; border-bottom-color: #ececec; }
.tree { list-style: none; margin: 2px 0 0; padding: 0; }
.tree li { display: flex; align-items: center; gap: 2px; height: 10px; }
.tree svg { width: 8px; height: 8px; }
.tree span { padding: 0 2px; }
.tree .root { padding-left: 5px; }
.tree .chip { display: flex; align-items: center; gap: 4px; padding: 0 4px 0 1px; height: 7px; background: #999; color: #fff; font-weight: 600; }
.l1 { padding-left: 12px; }
.l2 { padding-left: 30px; }
.ex { padding-left: 22px; }
.l2 span { margin-left: 1px; }

/* Floating dialogs */
.dialogs { position: absolute; top: 52px; right: 2px; display: flex; align-items: flex-start; gap: 2px; }
.panel { width: 104px; background: #f4f4f4; border: 1px solid #dedede; }
.panel .fields { padding: 0 5px; }
.edit .panel-head { margin-bottom: 1px; }
.row { display: flex; align-items: center; height: 13px; }
.row > :first-child { width: 28px; flex: none; white-space: nowrap; }
.dim { color: #bbb; }
.row.tall { height: 38px; align-items: flex-start; }
.tall label { padding-top: 1px; }
.row input, .row textarea, .row select {
  width: 57px;
  height: 11px;
  margin: 0;
  padding: 0 2px;
  border: 1px solid #dcdcdc;
  border-radius: 0;
  background: #fff;
  font: inherit;
  color: #333;
  appearance: none;
}
.row textarea { height: 37px; resize: none; font-weight: 700; }
.pick { position: relative; display: flex; }
.pick .caret { position: absolute; right: 2px; top: 5px; }
.seg { width: 10px; height: 12px; margin-right: 2px; }
.seg svg { width: 10px; height: 12px; }
.seg.on { background: #8fcbe6; }
.seg.pick-on { background: #2e9fd6; height: 13px; }
.face-b { font: 900 8px/12px "Open Sans", sans-serif; }
.face-i { font: italic 9px/12px "Liberation Serif", serif; }
.actions { display: flex; justify-content: flex-end; align-items: center; gap: 7px; height: 15px; padding: 0 3px; border-top: 1px solid #e0e0e0; }
.actions button { height: 10px; min-width: 25px; padding: 0 3px; border: 1px solid #d2d2d2; background: #eee; line-height: 8px; }
.info { width: 6px; height: 6px; margin-right: auto; margin-left: 2px; }
.palette h3 { display: flex; align-items: center; gap: 3px; height: 13px; margin: 0; font-size: 5px; font-weight: 600; }
.palette h3 .caret { border-width: 3px 2px 0; }
.opt { display: flex; align-items: center; height: 13px; }
.opt :first-child { width: 61px; white-space: nowrap; }
.opt svg { width: 8px; height: 8px; }
.opt .second { margin-left: 4px; }
.opt input {
  appearance: none;
  display: grid;
  place-items: center;
  width: 6px;
  height: 6px;
  margin: 0 1px;
  border: 1px solid #888;
  border-radius: 1px;
  background: #fff;
}
.opt input:checked::before {
  content: "";
  width: 3px;
  height: 5px;
  margin-top: -2px;
  border: solid #222;
  border-width: 0 1px 1px 0;
  transform: rotate(40deg);
}

.tooltip {
  position: absolute;
  left: 12px;
  bottom: 41px;
  height: 8px;
  padding: 0 2px;
  line-height: 6px;
  white-space: nowrap;
  background: #f4f4f4;
  border: 1px solid #aaa;
  box-shadow: 0 1px 3px #0003;
  font-family: Inter, sans-serif;
  color: #222;
}
.comments { position: absolute; left: 2px; bottom: 2px; width: 124px; padding: 0 4px 0 10px; background: #f5f5f5; border-bottom-color: #eee; }
.navbar { position: absolute; left: 50%; bottom: 2px; transform: translateX(-50%); display: flex; gap: 3px; padding: 1px; background: #f7f7f7; }
.navbar button { display: flex; align-items: center; gap: 1px; }
.navbar svg { width: 8px; height: 8px; }
```
